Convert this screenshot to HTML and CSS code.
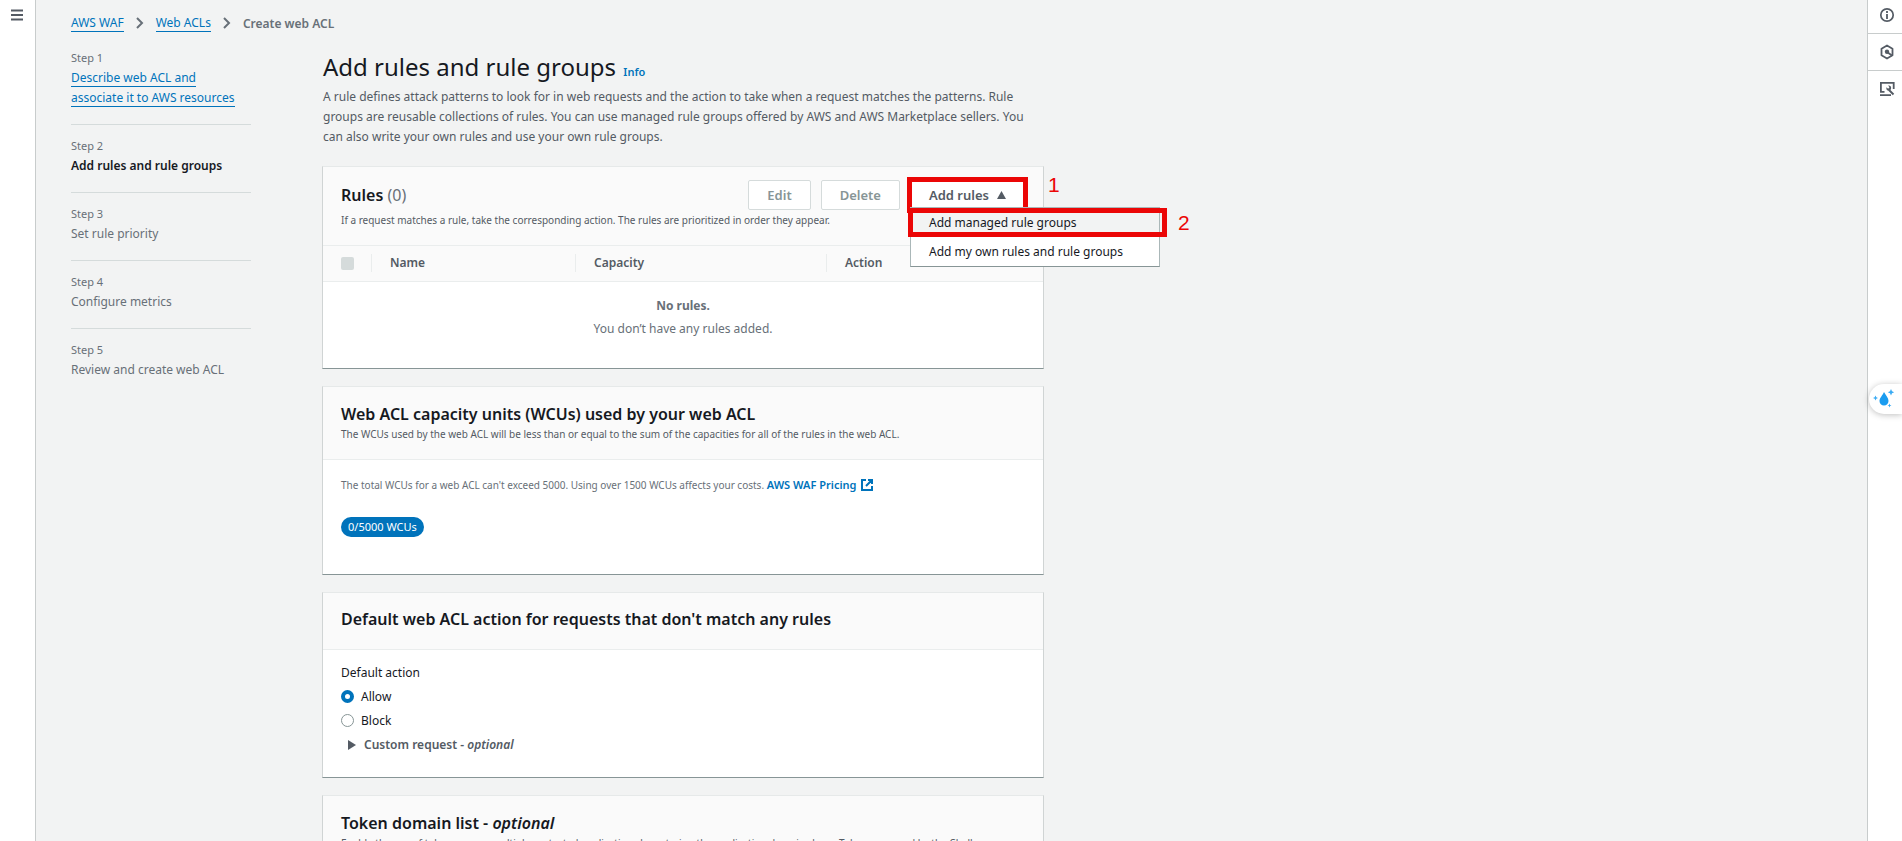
FILE: index.html
```html
<!DOCTYPE html>
<html lang="en">
<head>
<meta charset="utf-8">
<title>Create web ACL</title>
<link rel="stylesheet" href="styles.css">
</head>
<body>
<div class="shell">
  <aside class="rail rail-left">
    <button class="icon-button" aria-label="Open navigation">
      <svg width="14" height="14" viewBox="0 0 14 14"><path d="M1 2.500h12M1 7h12M1 11.500h12" fill="none" stroke="#545b64" stroke-width="2"/></svg>
    </button>
  </aside>

  <div class="page">
    <nav class="breadcrumbs" aria-label="Breadcrumbs">
      <a class="link" href="#">AWS WAF</a>
      <svg class="chevron" width="8" height="12" viewBox="0 0 8 12"><path d="M1 1l5 5-5 5" fill="none" stroke="#687078" stroke-width="2"/></svg>
      <a class="link" href="#">Web ACLs</a>
      <svg class="chevron" width="8" height="12" viewBox="0 0 8 12"><path d="M1 1l5 5-5 5" fill="none" stroke="#687078" stroke-width="2"/></svg>
      <span class="current">Create web ACL</span>
    </nav>

    <div class="columns">
      <ol class="steps">
        <li class="step"><span class="step-number">Step 1</span><a class="link" href="#">Describe web ACL and<br>associate it to AWS resources</a></li>
        <li class="step"><span class="step-number">Step 2</span><strong class="step-active">Add rules and rule groups</strong></li>
        <li class="step"><span class="step-number">Step 3</span><span>Set rule priority</span></li>
        <li class="step"><span class="step-number">Step 4</span><span>Configure metrics</span></li>
        <li class="step"><span class="step-number">Step 5</span><span>Review and create web ACL</span></li>
      </ol>

      <main class="content">
        <header class="intro">
          <h1 class="title">Add rules and rule groups <a class="info" href="#">Info</a></h1>
          <p class="lead">A rule defines attack patterns to look for in web requests and the action to take when a request matches the patterns. Rule groups are reusable collections of rules. You can use managed rule groups offered by AWS and AWS Marketplace sellers. You can also write your own rules and use your own rule groups.</p>
        </header>

        <section class="card">
          <div class="card-head rules-head">
            <div class="toolbar">
              <h2 class="heading">Rules <span class="count">(0)</span></h2>
              <div class="actions">
                <button class="button" disabled>Edit</button>
                <button class="button" disabled>Delete</button>
                <div class="dropdown">
                  <button class="button button-open" aria-expanded="true">Add rules
                    <svg width="9" height="8" viewBox="0 0 9 8"><path d="M4.500 0L9 8H0z" fill="#545b64"/></svg>
                  </button>
                  <span class="callout-number number-one">1</span>
                  <div class="menu">
                    <button class="menu-item menu-item-active">Add managed rule groups</button>
                    <button class="menu-item">Add my own rules and rule groups</button>
                    <span class="callout-number number-two">2</span>
                  </div>
                </div>
              </div>
            </div>
            <p class="note">If a request matches a rule, take the corresponding action. The rules are prioritized in order they appear.</p>
          </div>
          <table class="table">
            <colgroup><col class="col-select"><col class="col-name"><col class="col-capacity"><col></colgroup>
            <thead>
              <tr>
                <th><div class="cell"><input class="tick" type="checkbox" aria-label="Select all rules" disabled></div></th>
                <th><div class="cell">Name</div></th>
                <th><div class="cell">Capacity</div></th>
                <th><div class="cell">Action</div></th>
              </tr>
            </thead>
            <tbody>
              <tr><td class="empty" colspan="4"><strong>No rules.</strong><p>You don’t have any rules added.</p></td></tr>
            </tbody>
          </table>
        </section>

        <section class="card">
          <div class="card-head">
            <h2 class="heading">Web ACL capacity units (WCUs) used by your web ACL</h2>
            <p class="note">The WCUs used by the web ACL will be less than or equal to the sum of the capacities for all of the rules in the web ACL.</p>
          </div>
          <div class="card-body usage">
            <p class="note muted">The total WCUs for a web ACL can't exceed 5000. Using over 1500 WCUs affects your costs. <a class="pricing" href="#">AWS WAF Pricing
              <svg width="12" height="12" viewBox="0 0 12 12"><path d="M5 1H1v10h10V7M7 1h4v4M11 1L5 7" fill="none" stroke="#0073bb" stroke-width="2"/></svg></a></p>
            <span class="badge">0/5000 WCUs</span>
          </div>
        </section>

        <section class="card">
          <div class="card-head single">
            <h2 class="heading">Default web ACL action for requests that don't match any rules</h2>
          </div>
          <div class="card-body">
            <fieldset class="choices">
              <legend>Default action</legend>
              <label class="choice"><input class="radio" type="radio" name="action" checked>Allow</label>
              <label class="choice"><input class="radio" type="radio" name="action">Block</label>
            </fieldset>
            <button class="expander">
              <svg width="8" height="10" viewBox="0 0 8 10"><path d="M0 0l8 5-8 5z" fill="#545b64"/></svg>
              <span>Custom request - <em>optional</em></span>
            </button>
          </div>
        </section>

        <section class="card">
          <div class="card-head">
            <h2 class="heading">Token domain list - <em>optional</em></h2>
            <p class="note">Enable the use of tokens across multiple protected applications by entering the application domains here. Tokens are used by the Challenge</p>
          </div>
        </section>
      </main>
    </div>
  </div>

  <aside class="rail rail-right">
    <button class="tool" aria-label="Info">
      <svg width="16" height="16" viewBox="0 0 16 16"><circle cx="8" cy="8" r="6.200" fill="none" stroke="#545b64" stroke-width="1.700"/><path d="M8 4v2M8 7v5" stroke="#545b64" stroke-width="1.800"/></svg>
    </button>
    <button class="tool" aria-label="Diagnostics">
      <svg width="16" height="16" viewBox="0 0 16 16"><path d="M8 1.500l5.500 3.200v6.600L8 14.500l-5.500-3.200V4.700z" fill="none" stroke="#545b64" stroke-width="1.800" stroke-linejoin="round"/><circle cx="8" cy="7.800" r="2.200" fill="#545b64"/><path d="M8 8l5 3.500" stroke="#545b64" stroke-width="1.800"/></svg>
    </button>
    <button class="tool" aria-label="Tools">
      <svg width="16" height="16" viewBox="0 0 16 16"><path d="M5.500 10.800H1.900V1.900h12.800V8M1 14.200h11" fill="none" stroke="#545b64" stroke-width="1.800"/><path d="M10 9l4.500 4.500" stroke="#545b64" stroke-width="1.900"/><path d="M7.500 6.200l1.300 1.300 1.300-.2.200-1.400-1.200-1.300c2.300-.4 3.600 1.400 2.900 3.400-.6 1.500-2 2-3.300 1.500-1.200-.6-1.600-1.900-1.200-3.300z" fill="#545b64"/></svg>
    </button>
    <button class="assistant" aria-label="Assistant">
      <svg width="22" height="20" viewBox="0 0 22 20"><path d="M11 3c2 3.500 4.500 6 4.500 9a4.500 4.500 0 0 1-9 0c0-3 3-5.500 4.500-9z" fill="#1a9cf0"/><path d="M2.500 6.500l.8 1.700 1.700.8-1.700.8-.8 1.700-.8-1.700L0 9l1.700-.8zM18 0l1 2.200 2.200 1-2.200 1-1 2.300-1-2.300-2.200-1 2.200-1zM16.500 14.500l.6 1.400 1.400.6-1.400.6-.6 1.400-.6-1.400-1.400-.6 1.400-.6z" fill="#3aabf4"/></svg>
    </button>
  </aside>
</div>
</body>
</html>
```
FILE: styles.css
```css
*, *::before { box-sizing: border-box; }

body {
  margin: 0;
  height: 100vh;
  overflow: hidden;
  background: #f2f3f3;
  color: #16191f;
  font: 12px/20px "Noto Sans", sans-serif;
}

h1, h2, p, ol, fieldset { margin: 0; padding: 0; border: 0; }
button { font: inherit; color: inherit; cursor: pointer; }
svg { display: block; flex: none; }

.shell { display: flex; height: 100vh; overflow: hidden; }

.rail { flex: none; width: 36px; background: #fff; }
.rail-left { border-right: 1px solid #c8cccc; }
.rail-right { border-left: 1px solid #c8cccc; position: relative; width: 35px; }
.icon-button { display: block; padding: 8px 10px; border: 0; background: none; }

.tool {
  display: flex;
  align-items: center;
  justify-content: center;
  width: 100%;
  height: 37px;
  padding: 0 0 1px 3px;
  border: 0;
  border-bottom: 1px solid #c8cccc;
  background: none;
}
.tool:first-child { height: 34px; padding-bottom: 3px; }
.tool:nth-child(3) { border-color: transparent; }

.assistant {
  position: absolute;
  top: 384px;
  right: 0;
  width: 33px;
  height: 30px;
  padding: 5px 4px;
  border: 0;
  border-radius: 15px 0 0 15px;
  background: #fff;
  box-shadow: 0 1px 6px rgba(0, 0, 0, 0.25);
}

.page { flex: 1; min-width: 0; padding: 14px 35px; }

.link { color: #0073bb; text-decoration: none; border-bottom: 1px solid #0073bb; }

.breadcrumbs { display: flex; align-items: center; line-height: 17px; }
.chevron { margin: 0 12px; }
.current { color: #687078; font-weight: 600; }

.columns {
  display: grid;
  grid-template-columns: 180px minmax(0, 722px);
  gap: 71px;
  padding-top: 16px;
}

.steps { list-style: none; color: #687078; }
.step { padding: 11px 0 16px; border-bottom: 1px solid #d5dbdb; }
.step:first-child { padding-top: 0; }
.step:last-child { border: 0; }
.step-number { display: block; font-size: 11px; }
.step-active { color: #16191f; font-weight: 600; }

.intro { padding: 2px 1px 19px; }
.title { padding-bottom: 4px; font-size: 24px; line-height: 33px; font-weight: 400; }
.info { margin-left: 1px; color: #0073bb; font-size: 11px; line-height: 1; font-weight: 600; text-decoration: none; }
.lead { color: #545b64; }

.card {
  margin-bottom: 17px;
  border: 1px solid #d0d4d4;
  border-top-color: #e6e9e9;
  border-bottom-color: #879596;
  background: #fff;
}
.card-head {
  padding: 16px 18px;
  border-bottom: 1px solid #eaeded;
  background: #fafafa;
}
.rules-head { padding-top: 13px; }
.rules-head .note { padding-top: 1px; }
.single { padding: 15px 18px 19px; }
.heading { font-size: 16px; line-height: 22px; font-weight: 600; }
.count { color: #687078; font-weight: 400; }
.note { color: #545b64; font-size: 10px; line-height: 18px; }
.muted { color: #687078; }

.toolbar { display: flex; justify-content: space-between; align-items: center; }
.actions { display: flex; gap: 10px; }
.button {
  height: 30px;
  padding: 0 18px;
  border: 1px solid #d5dbdb;
  border-radius: 2px;
  background: #fff;
  color: #545b64;
  font-size: 13px;
  font-weight: 600;
}
.button:disabled { color: #879596; }

.dropdown { position: relative; }
.button-open {
  display: flex;
  align-items: center;
  gap: 8px;
  border-color: transparent;
  border-radius: 0;
  outline: 5px solid #eb0606;
  outline-offset: -2px;
}
.menu {
  position: absolute;
  z-index: 1;
  top: 27px;
  left: 0;
  width: 250px;
  border: 1px solid #aab7b8;
  border-bottom-color: #879596;
  background: #fff;
}
.menu::before {
  content: "";
  position: absolute;
  inset: 0 -8px auto -3px;
  height: 29px;
  border: 5px solid #eb0606;
  pointer-events: none;
}
.menu-item {
  display: block;
  width: 100%;
  height: 29px;
  padding: 0 18px;
  border: 0;
  background: none;
  color: #16191f;
  text-align: left;
}
.menu-item-active { background: #f2f3f3; }
.callout-number {
  position: absolute;
  color: #eb0606;
  font: 21px/20px "Liberation Sans", Arial, sans-serif;
}
.number-one { top: -5px; left: calc(100% + 23px); }
.number-two { top: 5px; left: calc(100% + 19px); }

.table { width: 100%; border-collapse: collapse; table-layout: fixed; }
.col-select { width: 49px; }
.col-name { width: 204px; }
.col-capacity { width: 251px; }
.table th {
  height: 35px;
  padding: 0;
  border-bottom: 1px solid #eaeded;
  background: #fafafa;
  color: #545b64;
  font-weight: 600;
  text-align: left;
}
.cell { display: flex; align-items: center; height: 18px; padding: 0 18px; border-right: 1px solid #eaeded; }
th:last-child .cell { border: 0; }
.tick {
  appearance: none;
  flex: none;
  width: 13px;
  height: 13px;
  margin: 0;
  border-radius: 2px;
  background: #d5dbdb;
}
.empty { padding: 14px 18px 29px; color: #687078; text-align: center; }
.empty p { padding-top: 3px; }

.card-body { padding: 13px 18px 22px; }
.usage { padding: 16px 18px 37px; }
.pricing { display: inline-flex; align-items: center; gap: 5px; color: #0073bb; font-size: 11px; font-weight: 600; text-decoration: none; }
.badge {
  display: inline-block;
  margin-top: 23px;
  padding: 0 7px;
  border-radius: 10px;
  background: #0073bb;
  color: #fff;
  font-size: 11px;
}

.choices legend { padding: 0; }
.choice { display: flex; align-items: center; gap: 7px; padding-top: 4px; }
.radio {
  appearance: none;
  flex: none;
  width: 13px;
  height: 13px;
  margin: 0;
  border: 1px solid #879596;
  border-radius: 50%;
  background: #fff;
}
.radio:checked { border: 4px solid #0073bb; }
.expander {
  display: flex;
  align-items: center;
  gap: 8px;
  margin-top: 4px;
  padding: 0 7px;
  border: 0;
  background: none;
  color: #545b64;
  font-weight: 600;
}
```
